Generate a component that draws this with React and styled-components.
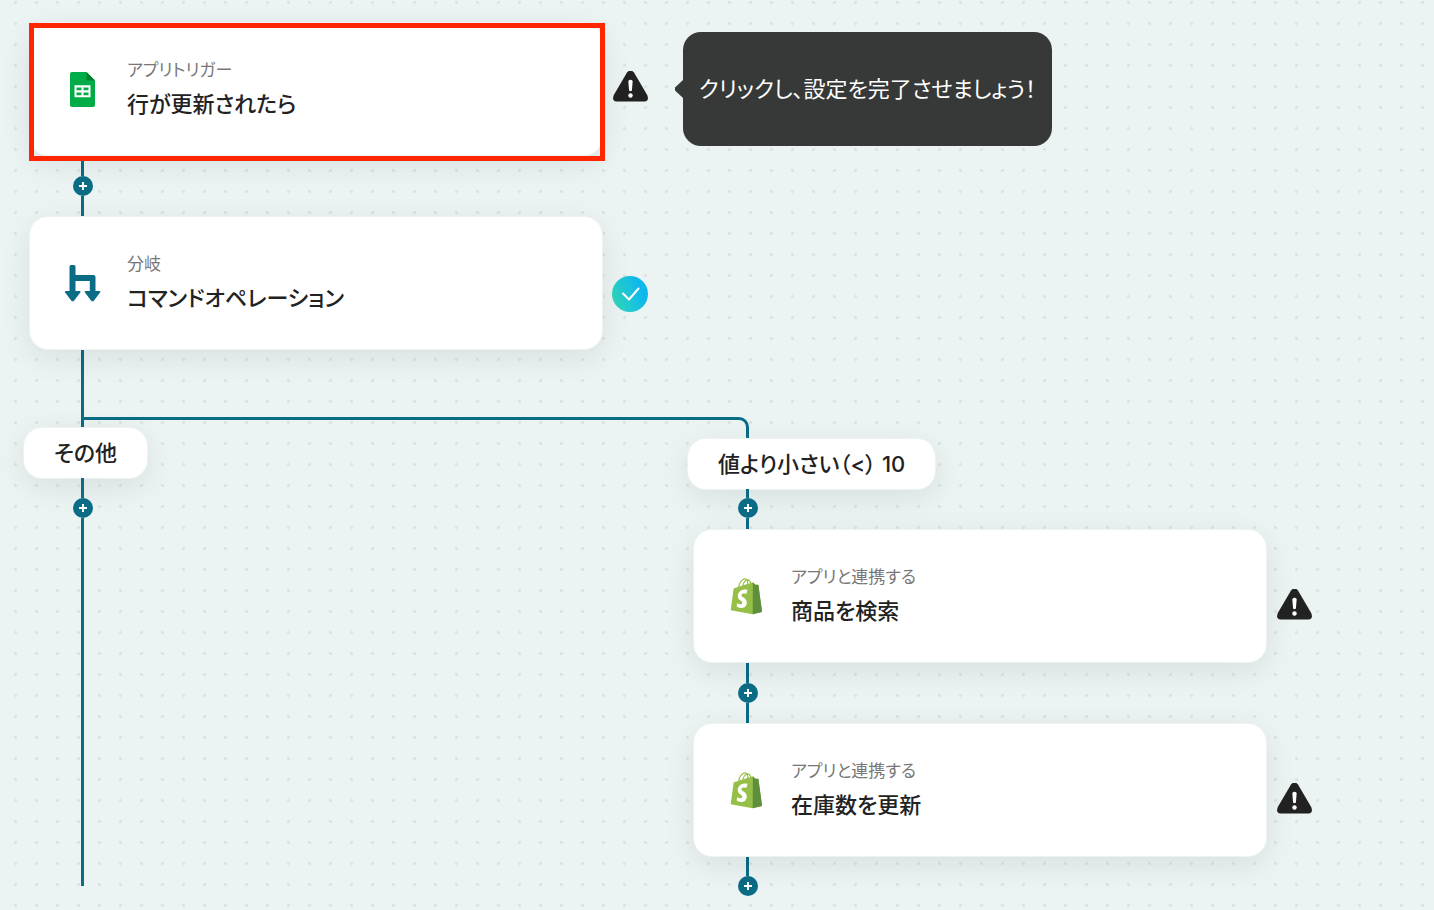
import styled, { createGlobalStyle, css } from "styled-components";

export default function App() {
  return (
    <>
      <GlobalStyle />
      <StyledCanvas>
        <StyledNodeRow>
          <StyledCard $highlighted>
            <SheetsIcon />
            <CardText caption="アプリトリガー" title="行が更新されたら" />
          </StyledCard>
          <StyledStatus>
            <WarningIcon />
          </StyledStatus>
          <StyledTooltip role="tooltip">
            クリックし、設定を完了させましょう！
          </StyledTooltip>
        </StyledNodeRow>
        <Connector />
        <StyledNodeRow>
          <StyledCard>
            <BranchIcon />
            <CardText caption="分岐" title="コマンドオペレーション" />
          </StyledCard>
          <StyledStatus $lowered>
            <CheckIcon />
          </StyledStatus>
        </StyledNodeRow>
        <StyledRail>
          <StyledLine $length={68} />
        </StyledRail>
        <StyledBranches>
          <StyledElbow />
          <StyledBranch>
            <StyledRail>
              <StyledLine $length={11} />
            </StyledRail>
            <StyledLabel>その他</StyledLabel>
            <Connector before={20} grow />
          </StyledBranch>
          <StyledBranch $side>
            <StyledLabel>値より小さい（&lt;） 10</StyledLabel>
            <Connector before={9} after={12} />
            <AppNode title="商品を検索" />
            <Connector />
            <AppNode title="在庫数を更新" />
            <Connector before={20} after={0} />
          </StyledBranch>
        </StyledBranches>
      </StyledCanvas>
    </>
  );
}

function AppNode({ title }) {
  return (
    <StyledNodeRow>
      <StyledCard>
        <ShopifyIcon />
        <CardText caption="アプリと連携する" title={title} />
      </StyledCard>
      <StyledStatus $lowered>
        <WarningIcon />
      </StyledStatus>
    </StyledNodeRow>
  );
}

function CardText({ caption, title }) {
  return (
    <StyledCardText>
      <StyledCaption>{caption}</StyledCaption>
      <StyledTitle>{title}</StyledTitle>
    </StyledCardText>
  );
}

function Connector({ before = 21, after = 21, grow = false }) {
  return (
    <StyledRail $grow={grow}>
      <StyledLine $length={before} />
      <StyledAddButton type="button" aria-label="追加">
        <svg width="8" height="8" viewBox="0 0 8 8" aria-hidden="true">
          <path d="M4 0v8M0 4h8" stroke="#fff" strokeWidth="2" />
        </svg>
      </StyledAddButton>
      <StyledLine $length={after} $grow={grow} />
    </StyledRail>
  );
}

function SheetsIcon() {
  return (
    <StyledIcon viewBox="0 0 36 36" aria-hidden="true">
      <path
        fill="#00ac47"
        d="M8 1H22.500l8.500 8.500V34a2 2 0 0 1-2 2h-21a2 2 0 0 1-2-2V3a2 2 0 0 1 2-2z"
      />
      <path fill="#00832d" d="M22.500 1l8.500 8.500H22.500z" />
      <path
        fill="#fff"
        fillRule="evenodd"
        d="M10.500 14.300h16v12H10.500zM12.500 16.500v2.700h5v-2.700zM19.500 16.500v2.700h5v-2.700zM12.500 21.500v2.700h5v-2.700zM19.500 21.500v2.700h5v-2.700z"
      />
    </StyledIcon>
  );
}

function BranchIcon() {
  return (
    <StyledIcon viewBox="0 0 36 36" aria-hidden="true" overflow="visible">
      <path
        fill="#0b6c86"
        transform="translate(.5 1)"
        d="M6.500-1H9.500Q11-1 11 .5V9H29Q31 9 31 11V25H34.800Q36.600 25 35.600 26.600L29.500 34.400Q28 36.200 26.500 34.400L20.400 26.600Q19.400 25 21.200 25H25.300V15H11V25H15Q16.800 25 15.800 26.600L9.700 34.400Q8.200 36.200 6.700 34.400L.6 26.600Q-.4 25 1.400 25H5V.5Q5-1 6.500-1z"
      />
    </StyledIcon>
  );
}

function ShopifyIcon() {
  return (
    <StyledIcon viewBox="-2 -1 109.5 124.5" aria-hidden="true" overflow="visible">
      <path
        fill="#95bf47"
        d="M95.900 23.900c-.1-.6-.6-1-1.100-1s-9.300-.2-9.300-.2-7.400-7.200-8.100-7.900c-.7-.7-2.200-.5-2.700-.3 0 0-1.400.4-3.700 1.100-.4-1.300-1-2.800-1.800-4.400-2.600-5-6.500-7.700-11.100-7.700-.3 0-.6 0-1 .1-.1-.2-.3-.3-.4-.5-2-2.200-4.600-3.200-7.700-3.100-6 .2-12 4.500-16.800 12.200-3.400 5.400-6 12.200-6.700 17.500-6.900 2.100-11.700 3.600-11.800 3.700-3.500 1.100-3.600 1.200-4 4.500-.3 2.500-9.500 73-9.500 73l75.600 13.100 32.800-8.200S96 24.500 95.900 23.900zM67.200 16.800c-1.800.5-3.800 1.200-5.900 1.800 0-3-.4-7.300-1.800-10.900 4.500.8 6.800 5.900 7.700 9.100zm-10 3.100c-4 1.200-8.400 2.600-12.800 3.900 1.200-4.700 3.600-9.400 6.400-12.500 1.100-1.100 2.600-2.400 4.300-3.200 1.700 3.600 2.100 8.500 2.100 11.800zM49.100 4c1.400 0 2.600.3 3.600.9-1.600.8-3.200 2.100-4.700 3.600-3.800 4.100-6.700 10.500-7.900 16.600-3.600 1.100-7.200 2.200-10.500 3.200C31.700 18.800 39.800 4.300 49.100 4z"
      />
      <path
        fill="#5e8e3e"
        d="M94.800 22.900c-.5 0-9.300-.2-9.300-.2s-7.400-7.200-8.100-7.900c-.3-.3-.6-.4-1-.4L76 124.500l32.800-8.200S96 24.500 95.900 23.900c-.1-.6-.6-1-1.100-1z"
      />
      <path
        fill="#fff"
        d="M57.900 40.100l-3.800 14.400s-4.300-2-9.400-1.600c-7.500.5-7.500 5.200-7.500 6.400.4 6.400 17.300 7.800 18.300 22.900.7 11.900-6.300 20-16.400 20.600-12.200.8-18.900-6.400-18.900-6.400l2.600-11s6.700 5.100 12.100 4.700c3.500-.2 4.800-3.100 4.700-5.100-.5-8.400-14.300-7.900-15.200-21.700-.8-11.600 6.800-23.300 23.600-24.400 6.500-.5 9.900 1.200 9.900 1.200z"
      />
    </StyledIcon>
  );
}

function WarningIcon() {
  return (
    <StyledIcon viewBox="0 1 36 36" role="img" aria-label="設定が未完了です">
      <path
        fill="#222"
        d="M15 2.500Q18.500-1.700 22 2.500L35.200 25Q37.500 30.800 32.500 31.500H4.500Q-.5 30.800 1.800 25z"
      />
      <path
        fill="#fff"
        d="M16.300 11Q18.500 8.600 20.700 11L19.900 20.500Q18.500 22 17.100 20.500z"
      />
      <circle cx="18.500" cy="25.500" r="2.200" fill="#fff" />
    </StyledIcon>
  );
}

function CheckIcon() {
  return (
    <StyledIcon viewBox="0 0 36 36" role="img" aria-label="設定完了">
      <defs>
        <linearGradient id="done" x1="0" y1="0.7" x2="1" y2="0.3">
          <stop offset="0.05" stopColor="#2ed6bd" />
          <stop offset="0.8" stopColor="#0fb8ec" />
        </linearGradient>
      </defs>
      <circle cx="18" cy="18" r="18" fill="url(#done)" />
      <path
        d="M11 17.500l6 6L26.500 12.500"
        fill="none"
        stroke="#fff"
        strokeWidth="2"
        strokeLinecap="round"
      />
    </StyledIcon>
  );
}

const teal = "#0b6c86";

const GlobalStyle = createGlobalStyle`
  * {
    box-sizing: border-box;
  }

  body {
    margin: 0;
    color: #222;
    background-color: #ebf4f3;
    font-family: Inter, "Noto Sans CJK JP", sans-serif;
    font-feature-settings: "palt";
  }
`;

const StyledCanvas = styled.main`
  --rail: 57px;
  min-height: 100vh;
  padding: 23px 24px 14px;
  background-image: radial-gradient(circle, #dae3e2 1px, transparent 2px);
  background-size: 21px 21px;
  background-position: 5px -8px;
`;

const StyledNodeRow = styled.div`
  display: flex;
  align-items: center;
  margin-left: 6px;
`;

const surface = css`
  background-color: #fff;
  border-radius: 18px;
  box-shadow:
    0 0 0 1px #edf2f2,
    0 8px 32px rgba(0, 20, 20, 0.09);
`;

const StyledCard = styled.section`
  ${surface}
  position: relative;
  display: flex;
  flex: 0 0 572px;
  align-items: center;
  gap: 27px;
  height: 132px;
  padding: 0 34px;

  ${({ $highlighted }) =>
    $highlighted &&
    css`
      &::after {
        content: "";
        position: absolute;
        z-index: 1;
        inset: 0 -3px -6px -1px;
        border: 5px solid #ff2600;
      }
    `}
`;

const StyledCardText = styled.div`
  display: flex;
  flex-direction: column;
  gap: 6px;
`;

const StyledCaption = styled.p`
  margin: 0;
  color: #777;
  font-size: 17px;
  font-weight: 400;
  line-height: 24px;
`;

const StyledTitle = styled.h2`
  margin: 0;
  font-size: 22px;
  font-weight: 500;
  line-height: 32px;
`;

const StyledIcon = styled.svg`
  display: block;
  flex: none;
  width: 36px;
  height: 36px;
`;

const StyledStatus = styled.div`
  flex: none;
  margin-left: 10px;
  padding-top: ${({ $lowered }) => ($lowered ? "22px" : "0")};
`;

const StyledTooltip = styled.div`
  position: relative;
  margin-left: 35px;
  padding: 41px 16px;
  color: #fff;
  background-color: rgba(47, 49, 48, 0.96);
  border-radius: 18px;
  font-size: 22px;
  line-height: 32px;
  white-space: nowrap;

  &::before {
    content: "";
    position: absolute;
    top: calc(50% - 9px);
    right: 100%;
    width: 8px;
    height: 18px;
    background-color: inherit;
    clip-path: polygon(100% 0, 100% 100%, 0 58%, 0 42%);
  }
`;

const StyledRail = styled.div`
  display: flex;
  flex-direction: column;
  flex: ${({ $grow }) => ($grow ? "1" : "none")};
  padding-left: var(--rail);
`;

const StyledLine = styled.div`
  flex: ${({ $grow, $length }) => ($grow ? "1" : `0 0 ${$length}px`)};
  width: 3px;
  background-color: ${teal};
`;

const StyledAddButton = styled.button`
  display: flex;
  align-items: center;
  justify-content: center;
  width: 20px;
  height: 20px;
  margin-left: -8px;
  padding: 0;
  background-color: ${teal};
  border: none;
  border-radius: 50%;
  cursor: pointer;
`;

const StyledBranches = styled.div`
  display: grid;
  grid-template-columns: 664px auto;
`;

/* runs from the left rail over to the right one */
const StyledElbow = styled.div`
  grid-area: 1 / 1 / 2 / 2;
  height: 22px;
  margin-left: var(--rail);
  margin-right: -61px;
  border: solid ${teal};
  border-width: 3px 3px 0 0;
  border-top-right-radius: 10px;
`;

const StyledBranch = styled.div`
  --rail: ${({ $side }) => ($side ? "58px" : "57px")};
  grid-area: ${({ $side }) => ($side ? "1 / 2 / 2 / 3" : "1 / 1 / 2 / 2")};
  display: flex;
  flex-direction: column;
  align-items: flex-start;
  padding: ${({ $side }) => ($side ? "22px 0 0" : "0 0 10px")};
`;

const StyledLabel = styled.div`
  ${surface}
  padding: 9px 30px;
  font-size: 22px;
  font-weight: 500;
  line-height: 32px;
  white-space: nowrap;
`;
